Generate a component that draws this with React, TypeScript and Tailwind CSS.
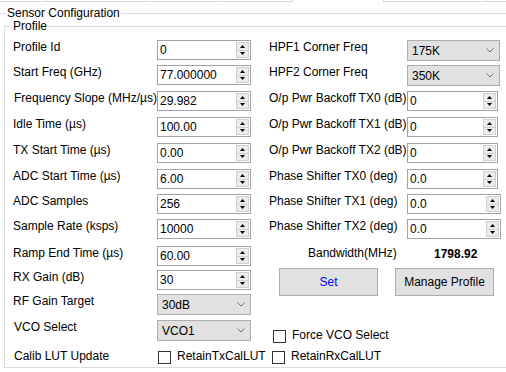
import React from "react";

const Up = () => (
  <svg width="5" height="3" viewBox="0 0 5 3">
    <polygon points="0,3 2.5,0 5,3" fill="#000" />
  </svg>
);
const Down = () => (
  <svg width="5" height="3" viewBox="0 0 5 3">
    <polygon points="0,0 5,0 2.5,3" fill="#000" />
  </svg>
);

function Spin({ value, w }: { value: string; w: string }) {
  return (
    <div className={`flex h-[20px] items-center border border-[#a3a3a3] bg-white ${w}`}>
      <span className="flex-1 whitespace-nowrap pl-[2px] leading-[14px]">{value}</span>
      <div className="mr-[1px] flex h-[16px] w-[13px] flex-col border border-[#cfcfcf] bg-[#ececec]">
        <div className="flex flex-1 items-center justify-center border-b border-[#cfcfcf]">
          <Up />
        </div>
        <div className="flex flex-1 items-center justify-center">
          <Down />
        </div>
      </div>
    </div>
  );
}

function Combo({ value, w }: { value: string; w: string }) {
  return (
    <div className={`flex h-[21px] items-center border border-[#adadad] bg-[#e1e1e1] ${w}`}>
      <span className="flex-1 whitespace-nowrap pl-[4px] leading-[14px]">{value}</span>
      <svg width="8" height="5" viewBox="0 0 8 5" className="mr-[5px]">
        <polyline points="0.5,0.5 4,4 7.5,0.5" fill="none" stroke="#707070" strokeWidth="1" />
      </svg>
    </div>
  );
}

const Check = () => <div className="h-[13px] w-[13px] shrink-0 border border-[#333333] bg-white" />;

type Row = { label: string; value: string; h: string; kind: "spin" | "combo"; indent?: boolean };

const leftRows: Row[] = [
  { label: "Profile Id", value: "0", h: "h-[25px]", kind: "spin" },
  { label: "Start Freq (GHz)", value: "77.000000", h: "h-[26px]", kind: "spin" },
  { label: "Frequency Slope (MHz/µs)", value: "29.982", h: "h-[26px]", kind: "spin", indent: true },
  { label: "Idle Time (µs)", value: "100.00", h: "h-[26px]", kind: "spin" },
  { label: "TX Start Time (µs)", value: "0.00", h: "h-[26px]", kind: "spin" },
  { label: "ADC Start Time (µs)", value: "6.00", h: "h-[25px]", kind: "spin" },
  { label: "ADC Samples", value: "256", h: "h-[25px]", kind: "spin" },
  { label: "Sample Rate (ksps)", value: "10000", h: "h-[27px]", kind: "spin" },
  { label: "Ramp End Time (µs)", value: "60.00", h: "h-[24px]", kind: "spin" },
  { label: "RX Gain (dB)", value: "30", h: "h-[24px]", kind: "spin" },
  { label: "RF Gain Target", value: "30dB", h: "h-[26px]", kind: "combo" },
  { label: "VCO Select", value: "VCO1", h: "h-[25px]", kind: "combo", indent: true },
];

type RRow = { label: string; value: string; h: string; kind: "spin" | "combo"; w: string };

const rightRows: RRow[] = [
  { label: "HPF1 Corner Freq", value: "175K", h: "h-[25px]", kind: "combo", w: "w-[93px]" },
  { label: "HPF2 Corner Freq", value: "350K", h: "h-[26px]", kind: "combo", w: "w-[93px]" },
  { label: "O/p Pwr Backoff TX0 (dB)", value: "0", h: "h-[26px]", kind: "spin", w: "w-[91px]" },
  { label: "O/p Pwr Backoff TX1 (dB)", value: "0", h: "h-[26px]", kind: "spin", w: "w-[91px]" },
  { label: "O/p Pwr Backoff TX2 (dB)", value: "0", h: "h-[26px]", kind: "spin", w: "w-[91px]" },
  { label: "Phase Shifter TX0 (deg)", value: "0.0", h: "h-[25px]", kind: "spin", w: "w-[91px]" },
  { label: "Phase Shifter TX1 (deg)", value: "0.0", h: "h-[25px]", kind: "spin", w: "w-[94px]" },
  { label: "Phase Shifter TX2 (deg)", value: "0.0", h: "h-[27px]", kind: "spin", w: "w-[94px]" },
];

export default function App() {
  return (
    <div className="h-[372px] w-[506px] overflow-hidden bg-white font-['Liberation_Sans',Arial,sans-serif] text-[12px] leading-[14px] text-black">
      {/* top tab strip remnants */}
      <div className="flex h-[2px]">
        <div className="w-[48px] border-b border-r border-[#d9d9d9]" />
        <div className="w-[98px] border-b border-r border-[#d9d9d9]" />
        <div className="w-[73px] border-b border-r border-[#d9d9d9]" />
        <div className="w-[74px] border-b border-r border-[#d9d9d9]" />
        <div className="w-[90px]" />
        <div className="w-[105px] border-b border-l border-r border-[#d9d9d9]" />
        <div className="flex-1 border-b border-[#d9d9d9]" />
      </div>

      {/* Sensor Configuration group */}
      <div className="mt-[11px] border-t border-[#dcdcdc]">
        <div className="-mt-[8px] ml-[6px] w-fit bg-white px-[1px] whitespace-nowrap">Sensor Configuration</div>

        {/* Profile group */}
        <div className="ml-[4px] mt-[6px] h-[342px] border-b border-l border-t border-[#dcdcdc]">
          <div className="-mt-[8px] ml-[7px] w-fit bg-white px-[1px]">Profile</div>

          <div className="mt-[7px] flex items-start">
            {/* left column */}
            <div className="ml-[8px] flex w-[238px] flex-col">
              {leftRows.map((r) => (
                <div key={r.label} className={`flex items-start ${r.h}`}>
                  <div className={`w-[144px] whitespace-nowrap ${r.indent ? "pl-[1px]" : ""}`}>{r.label}</div>
                  {r.kind === "spin" ? <Spin value={r.value} w="w-[94px]" /> : <Combo value={r.value} w="w-[94px]" />}
                </div>
              ))}
            </div>

            {/* right column */}
            <div className="ml-[18px] flex w-[233px] flex-col">
              {rightRows.map((r) => (
                <div key={r.label} className={`flex items-start ${r.h}`}>
                  <div className="w-[138px] whitespace-nowrap">{r.label}</div>
                  {r.kind === "spin" ? <Spin value={r.value} w={r.w} /> : <Combo value={r.value} w={r.w} />}
                </div>
              ))}
              <div className="flex h-[22px] items-start">
                <div className="ml-[39px] w-[126px] whitespace-nowrap">Bandwidth(MHz)</div>
                <div className="mt-[1px] font-bold">1798.92</div>
              </div>
              <div className="flex gap-[17px] pl-[10px]">
                <button className="h-[28px] w-[99px] border border-[#adadad] bg-[#e1e1e1] text-[#0000ff]">Set</button>
                <button className="h-[28px] w-[99px] border border-[#adadad] bg-[#e1e1e1]">Manage Profile</button>
              </div>
              <div className="mt-[32px] flex items-start gap-[6px] pl-[4px]">
                <div className="mt-[2px]">
                  <Check />
                </div>
                <span className="whitespace-nowrap">Force VCO Select</span>
              </div>
            </div>
          </div>

          {/* Calib row */}
          <div className="mt-[4px] ml-[9px] flex items-start">
            <div className="w-[144px] whitespace-nowrap">Calib LUT Update</div>
            <div className="flex w-[114px] items-start gap-[6px]">
              <div className="mt-[2px]">
                <Check />
              </div>
              <span className="whitespace-nowrap">RetainTxCalLUT</span>
            </div>
            <div className="flex items-start gap-[6px]">
              <div className="mt-[2px]">
                <Check />
              </div>
              <span className="whitespace-nowrap">RetainRxCalLUT</span>
            </div>
          </div>
        </div>
      </div>
    </div>
  );
}
